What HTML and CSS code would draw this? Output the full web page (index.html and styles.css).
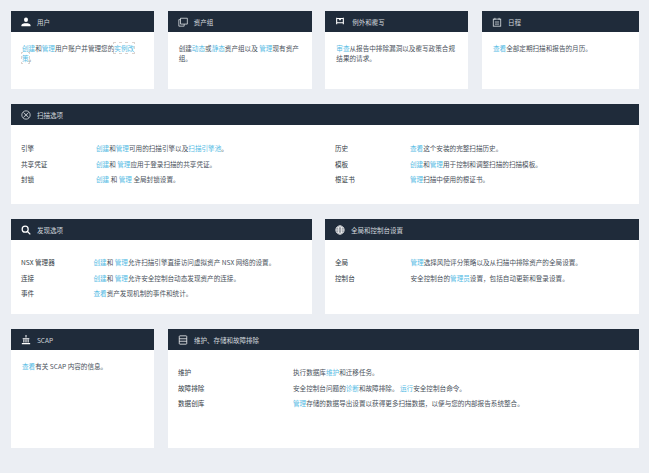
FILE: index.html
```html
<!DOCTYPE html>
<html lang="zh-CN">
<head>
<meta charset="utf-8">
<title>管理</title>
<link rel="stylesheet" href="styles.css">
</head>
<body>
<main class="page">
  <div class="row row-four">
    <section class="card">
      <header class="head"><svg class="icon" viewBox="0 0 12 12"><path d="M3.6 3.2a2.4 2.7 0 1 1 4.8 0a2.4 2.7 0 1 1-4.8 0z" fill="#fff"/><path d="M0.6 11V9.8C0.6 8.4 3.2 7.6 6 7.6s5.4.8 5.4 2.2V11z" fill="#fff"/></svg><h2>用户</h2></header>
      <div class="body"><p><a href="#">创建</a>和<a href="#">管理</a>用户账户并管理您的<a href="#" class="focus">实例改策</a>。</p></div>
    </section>
    <section class="card">
      <header class="head"><svg class="icon" viewBox="0 0 12 12" fill="none" stroke="#e8ecef" stroke-width=".9"><path d="M3 8.5V1.5h8.2v7z"/><path d="M3 3.2H1V11h6.4V8.5"/></svg><h2>资产组</h2></header>
      <div class="body"><p>创建<a href="#">动态</a>或<a href="#">静态</a>资产组以及 <a href="#">管理</a>现有资产组。</p></div>
    </section>
    <section class="card">
      <header class="head head-up"><svg class="icon" viewBox="0 0 12 12" fill="none" stroke="#fff" stroke-width="1.3"><path d="M2 2v8M10 2v8M2 3h8M2 8h8"/><path d="M4.2 3.2L6 5.6l1.8-2.4z" fill="#fff" stroke="none"/></svg><h2 class="title-wide">例外和覆写</h2></header>
      <div class="body"><p><a href="#">审查</a>从报告中排除漏洞以及覆写政策合规结果的请求。</p></div>
    </section>
    <section class="card">
      <header class="head"><svg class="icon" viewBox="0 0 12 12" fill="none" stroke="#e8ecef" stroke-width=".9"><rect x="1.5" y="2.5" width="9" height="8.5"/><path d="M3.5 1v2.5M8.5 1v2.5M3.5 6h5M3.5 8.5h5"/></svg><h2>日程</h2></header>
      <div class="body"><p><a href="#">查看</a>全部定期扫描和报告的月历。</p></div>
    </section>
  </div>

  <section class="card scan">
    <header class="head"><svg class="icon" viewBox="0 0 12 12" fill="none" stroke="#e8ecef" stroke-width=".9"><circle cx="6" cy="6" r="5"/><circle cx="6" cy="6" r="1"/><path d="M5.2 5.2L3 3.2M6.8 5.2L9 3.2M5.2 6.8L3 8.8M6.8 6.8L9 8.8"/></svg><h2>扫描选项</h2></header>
    <div class="body table-pair">
      <dl class="list list-scan">
        <dt>引擎</dt><dd><a href="#">创建</a>和<a href="#">管理</a>可用的扫描引擎以及<a href="#">扫描引擎池</a>。</dd>
        <dt>共享凭证</dt><dd><a href="#">创建</a>和 <a href="#">管理</a>应用于登录扫描的共享凭证。</dd>
        <dt>封锁</dt><dd><a href="#">创建</a> 和 <a href="#">管理</a> 全局封锁设置。</dd>
      </dl>
      <dl class="list list-scan">
        <dt>历史</dt><dd><a href="#">查看</a>这个安装的完整扫描历史。</dd>
        <dt>模板</dt><dd><a href="#">创建</a>和<a href="#">管理</a>用于控制和调整扫描的扫描模板。</dd>
        <dt>根证书</dt><dd><a href="#">管理</a>扫描中使用的根证书。</dd>
      </dl>
    </div>
  </section>

  <div class="row row-two">
    <section class="card discover">
      <header class="head"><svg class="icon" viewBox="0 0 12 12" fill="none" stroke="#fff" stroke-width="1.5"><circle cx="5" cy="5" r="3.6"/><path d="M7.8 7.8L11.2 11.2"/></svg><h2>发现选项</h2></header>
      <div class="body">
        <dl class="list list-discover">
          <dt>NSX 管理器</dt><dd><a href="#">创建</a>和 <a href="#">管理</a>允许扫描引擎直接访问虚拟资产 NSX 网络的设置。</dd>
          <dt>连接</dt><dd><a href="#">创建</a>和 <a href="#">管理</a>允许安全控制台动态发现资产的连接。</dd>
          <dt>事件</dt><dd><a href="#">查看</a>资产发现机制的事件和统计。</dd>
        </dl>
      </div>
    </section>
    <section class="card discover">
      <header class="head"><svg class="icon" viewBox="0 0 12 12" fill="none" stroke="#fff" stroke-width=".9"><circle cx="6" cy="6" r="5" fill="#fff" fill-opacity=".35"/><ellipse cx="6" cy="6" rx="2.2" ry="5"/><path d="M1 6h10M1.8 3.5h8.4M1.8 8.5h8.4"/></svg><h2>全局和控制台设置</h2></header>
      <div class="body">
        <dl class="list list-global">
          <dt>全局</dt><dd><a href="#">管理</a>选择风险评分策略以及从扫描中排除资产的全局设置。</dd>
          <dt>控制台</dt><dd>安全控制台的<a href="#">管理员</a>设置，包括自动更新和登录设置。</dd>
        </dl>
      </div>
    </section>
  </div>

  <div class="row row-last">
    <section class="card">
      <header class="head"><svg class="icon" viewBox="0 0 12 12" fill="#fff"><path d="M5.4 0h1.2v3H5.4zM2 4h8v1H2zM2.8 5.5h1.3V9H2.8zM5.35 5.5h1.3V9h-1.3zM7.9 5.5h1.3V9H7.9zM1 9.5h10V11H1z"/></svg><h2>SCAP</h2></header>
      <div class="body"><p><a href="#">查看</a>有关 SCAP 内容的信息。</p></div>
    </section>
    <section class="card">
      <header class="head"><svg class="icon" viewBox="0 0 12 12" fill="none" stroke="#fff" stroke-width=".9"><rect x="1.5" y="1" width="9" height="10" rx=".8"/><path d="M1.5 4.5h9M1.5 7.5h9"/></svg><h2>维护、存储和故障排除</h2></header>
      <div class="body">
        <dl class="list list-maint">
          <dt>维护</dt><dd>执行数据库<a href="#">维护</a>和迁移任务。</dd>
          <dt>故障排除</dt><dd>安全控制台问题的<a href="#">诊断</a>和故障排除。 <a href="#">运行</a>安全控制台命令。</dd>
          <dt>数据创库</dt><dd><a href="#">管理</a>存储的数据导出设置以获得更多扫描数据，以便与您的内部报告系统整合。</dd>
        </dl>
      </div>
    </section>
  </div>
</main>
</body>
</html>
```
FILE: styles.css
```css
* { box-sizing: border-box; }
html, body { margin: 0; padding: 0; }
body {
  background: #ebeef3;
  color: #4a525c;
  font-family: "Noto Sans CJK SC", "Noto Sans", sans-serif;
  font-size: 6.6px;
  line-height: 10px;
}
.page {
  width: 649px;
  height: 473px;
  padding: 11px 10px 0 11px;
  display: flex;
  flex-direction: column;
  gap: 15px;
}
.row { display: grid; column-gap: 13.67px; }
.row-four { grid-template-columns: 143px 144px 143px 157px; height: 78px; }
.row-two { grid-template-columns: 301px 314px; column-gap: 13px; height: 95px; }
.row-last { grid-template-columns: 143px 471px; column-gap: 14px; height: 119px; }
.card { background: #fff; display: flex; flex-direction: column; min-width: 0; }
.scan { height: 100px; }
.head {
  height: 21px;
  flex: none;
  background: #1f2b3a;
  display: flex;
  align-items: center;
  padding-left: 10px;
  gap: 6px;
}
.icon { width: 10px; height: 10px; flex: none; }
.head-up .icon { margin-top: -2px; }
.head h2 {
  margin: 0;
  font-size: 6.5px;
  font-weight: 400;
  color: #d3d8dd;
}
.head .title-wide { margin-left: 1px; }
.body { padding: 11px 11px 0; }
.body p { margin: 0; }
a { color: #55bbe4; text-decoration: none; }
a.focus { outline: 1px dotted #dcd3cf; }
.table-pair {
  display: grid;
  grid-template-columns: 314px 1fr;
  padding: 18px 10px 0;
}
.discover .body,
.row-last .card:last-child .body { padding: 17px 10px 0; }
.list {
  margin: 0;
  display: grid;
  row-gap: 5.5px;
}
.list-scan { grid-template-columns: 75px 1fr; }
.list-discover { grid-template-columns: 72.5px 1fr; }
.list-global { grid-template-columns: 75.5px 1fr; }
.list-maint { grid-template-columns: 115px 1fr; }
dt { font-weight: 400; color: #333b45; }
dd { margin: 0; }
```
